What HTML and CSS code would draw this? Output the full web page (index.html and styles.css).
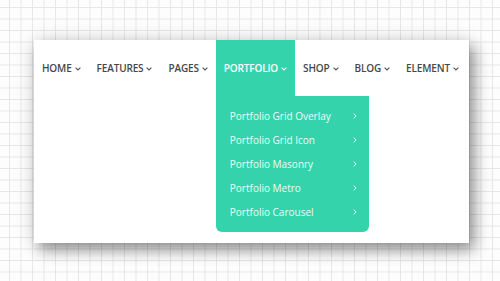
FILE: index.html
```html
<!DOCTYPE html>
<html lang="en">
<head>
    <meta charset="UTF-8">
    <meta name="viewport" content="width=device-width, initial-scale=1.0">
    <title>Mega Menu Preview</title>
    <link rel="stylesheet" href="styles.css">
</head>
<body>
    <div class="card">
        <nav class="menu">
            <div class="menu-item">HOME <svg class="caret" viewBox="0 0 6 4"><path d="M0.6 0.6 L3 3 L5.4 0.6"/></svg></div>
            <div class="menu-item">FEATURES <svg class="caret" viewBox="0 0 6 4"><path d="M0.6 0.6 L3 3 L5.4 0.6"/></svg></div>
            <div class="menu-item">PAGES <svg class="caret" viewBox="0 0 6 4"><path d="M0.6 0.6 L3 3 L5.4 0.6"/></svg></div>
            <div class="menu-item active">PORTFOLIO <svg class="caret" viewBox="0 0 6 4"><path d="M0.6 0.6 L3 3 L5.4 0.6"/></svg>
                <ul class="dropdown">
                    <li>Portfolio Grid Overlay <svg class="arrow" viewBox="0 0 4 6"><path d="M0.7 0.6 L3.1 3 L0.7 5.4"/></svg></li>
                    <li>Portfolio Grid Icon <svg class="arrow" viewBox="0 0 4 6"><path d="M0.7 0.6 L3.1 3 L0.7 5.4"/></svg></li>
                    <li>Portfolio Masonry <svg class="arrow" viewBox="0 0 4 6"><path d="M0.7 0.6 L3.1 3 L0.7 5.4"/></svg></li>
                    <li>Portfolio Metro <svg class="arrow" viewBox="0 0 4 6"><path d="M0.7 0.6 L3.1 3 L0.7 5.4"/></svg></li>
                    <li>Portfolio Carousel <svg class="arrow" viewBox="0 0 4 6"><path d="M0.7 0.6 L3.1 3 L0.7 5.4"/></svg></li>
                </ul>
            </div>
            <div class="menu-item">SHOP <svg class="caret" viewBox="0 0 6 4"><path d="M0.6 0.6 L3 3 L5.4 0.6"/></svg></div>
            <div class="menu-item">BLOG <svg class="caret" viewBox="0 0 6 4"><path d="M0.6 0.6 L3 3 L5.4 0.6"/></svg></div>
            <div class="menu-item">ELEMENT <svg class="caret" viewBox="0 0 6 4"><path d="M0.6 0.6 L3 3 L5.4 0.6"/></svg></div>
        </nav>
    </div>
</body>
</html>
```

FILE: styles.css
```css
body {
    margin: 0;
    padding: 40px 0 0 34px;
    min-height: 281px;
    box-sizing: border-box;
    background-color: #fdfdfd;
    background-image:
        linear-gradient(90deg, #e6e6e6 1px, transparent 1px),
        linear-gradient(180deg, #e6e6e6 1px, transparent 1px);
    background-size: 11.5px 11.5px;
    background-position: 9px 7px;
    font-family: "Open Sans", Arial, sans-serif;
}

.card {
    width: 435px;
    height: 203px;
    background: #fff;
    box-shadow: 5px 7px 14px rgba(0, 0, 0, 0.4), 0 0 20px rgba(0, 0, 0, 0.12);
}

.menu {
    display: flex;
    height: 56px;
}

.menu-item {
    position: relative;
    display: flex;
    align-items: center;
    padding: 0 8px;
    font-size: 10px;
    font-weight: 600;
    letter-spacing: -0.15px;
    color: #474747;
    white-space: nowrap;
}

.caret {
    width: 6px;
    height: 4px;
    margin-left: 3px;
    margin-top: 1px;
    fill: none;
    stroke: #555;
    stroke-width: 1.1;
}

.menu-item.active {
    background: #35d3ac;
    color: #fff;
}

.menu-item.active .caret {
    stroke: #fff;
}

/* submenu under the active item */
.dropdown {
    position: absolute;
    top: 56px;
    left: 0;
    width: 153px;
    margin: 0;
    padding: 8px 12px 8px 14px;
    box-sizing: border-box;
    list-style: none;
    background: #35d3ac;
    border-radius: 0 0 6px 6px;
}

.dropdown li {
    display: flex;
    justify-content: space-between;
    align-items: center;
    height: 24px;
    font-size: 10px;
    font-weight: 400;
    letter-spacing: 0;
    color: #eefcf7;
}

.arrow {
    width: 4px;
    height: 6px;
    fill: none;
    stroke: #eefcf7;
    stroke-width: 1;
}
```
